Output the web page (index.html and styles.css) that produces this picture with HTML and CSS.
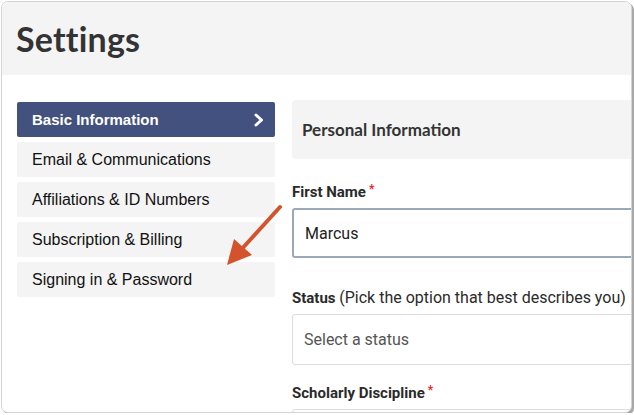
FILE: index.html
```html
<!DOCTYPE html>
<html>
<head>
<meta charset="utf-8">
<link rel="stylesheet" href="styles.css">
</head>
<body>
<div class="window">
  <header class="top">
    <h1 class="title">Settings</h1>
  </header>
  <div class="content">
    <nav class="side">
      <a class="item active">Basic Information<svg class="chev" width="12" height="14" viewBox="0 0 12 14"><path d="M3 2 L8.5 7 L3 12" fill="none" stroke="#fff" stroke-width="3" stroke-linecap="round" stroke-linejoin="round"/></svg></a>
      <a class="item">Email &amp; Communications</a>
      <a class="item">Affiliations &amp; ID Numbers</a>
      <a class="item">Subscription &amp; Billing</a>
      <a class="item">Signing in &amp; Password</a>
    </nav>
    <main class="main">
      <div class="panel">Personal Information</div>
      <div class="field f1">
        <label class="label">First Name<span class="req">*</span></label>
        <div class="input focus">Marcus</div>
      </div>
      <div class="field f2">
        <label class="label">Status <span class="hint">(Pick the option that best describes you)</span></label>
        <div class="input placeholder">Select a status</div>
      </div>
      <div class="field f3">
        <label class="label">Scholarly Discipline<span class="req">*</span></label>
        <div class="input"></div>
      </div>
    </main>
  </div>
  <svg class="arrow" width="70" height="70" viewBox="0 0 70 70">
    <path d="M56 4 L16 48" stroke="#d2532c" stroke-width="4" stroke-linecap="round" fill="none"/>
    <path d="M3 62 L10 36 L28 52 Z" fill="#d2532c"/>
  </svg>
</div>
</body>
</html>
```
FILE: styles.css
```css
html, body {
  margin: 0;
  padding: 0;
  background: #ffffff;
}
.window {
  position: relative;
  margin: 1px 0 0 1px;
  width: 629px;
  height: 410px;
  border: 1px solid #d4d4d4;
  border-radius: 7px;
  box-shadow: 2px 2px 0 #a8a8a8;
  overflow: hidden;
  background: #fff;
}
.top {
  height: 73px;
  background: #f4f4f4;
  display: flex;
  align-items: center;
  padding-left: 14px;
}
.title {
  margin: 0;
  font-family: Lato, "Open Sans", sans-serif;
  font-weight: 700;
  font-size: 34px;
  color: #333;
  letter-spacing: 0.2px;
}
.content {
  display: flex;
  gap: 17px;
  padding: 27px 0 0 15px;
}
.side {
  width: 258px;
  flex: none;
  display: flex;
  flex-direction: column;
  gap: 5px;
}
.item {
  height: 35px;
  display: flex;
  align-items: center;
  justify-content: space-between;
  padding: 0 10px 0 15px;
  background: #f4f4f4;
  border-radius: 2px;
  font-family: "Liberation Sans", Arial, sans-serif;
  font-size: 16px;
  color: #111;
}
.item.active {
  background: #42517e;
  color: #fff;
  font-weight: 700;
  font-size: 15px;
}
.main {
  flex: 1;
  min-width: 0;
  margin-top: -2px;
  margin-right: -40px;
}
.panel {
  height: 59px;
  background: #f4f4f4;
  border-radius: 4px;
  display: flex;
  align-items: center;
  padding-left: 10px;
  font-family: Lato, "Open Sans", sans-serif;
  font-weight: 700;
  font-size: 17px;
  color: #333;
}
.f1 { margin-top: 21px; }
.f2 { margin-top: 31px; }
.f3 { margin-top: 16px; }
.label {
  display: block;
  font-family: Roboto, "Liberation Sans", sans-serif;
  font-weight: 700;
  font-size: 15px;
  line-height: 18px;
  color: #2a2a2a;
  margin-bottom: 7px;
}
.hint {
  font-weight: 400;
  font-size: 16px;
}
.req {
  color: #e3262c;
  margin-left: 3px;
  font-size: 12px;
  vertical-align: 4px;
}
.input {
  box-sizing: border-box;
  height: 51px;
  border: 1.5px solid #dcdcdc;
  border-radius: 3px;
  display: flex;
  align-items: center;
  padding-left: 11px;
  font-family: Roboto, "Liberation Sans", sans-serif;
  font-size: 16px;
  color: #222;
}
.input.focus {
  height: 50px;
  border: 2px solid #9ca7b9;
}
.input.placeholder {
  color: #555;
}
.arrow {
  position: absolute;
  left: 222px;
  top: 201px;
}
```
